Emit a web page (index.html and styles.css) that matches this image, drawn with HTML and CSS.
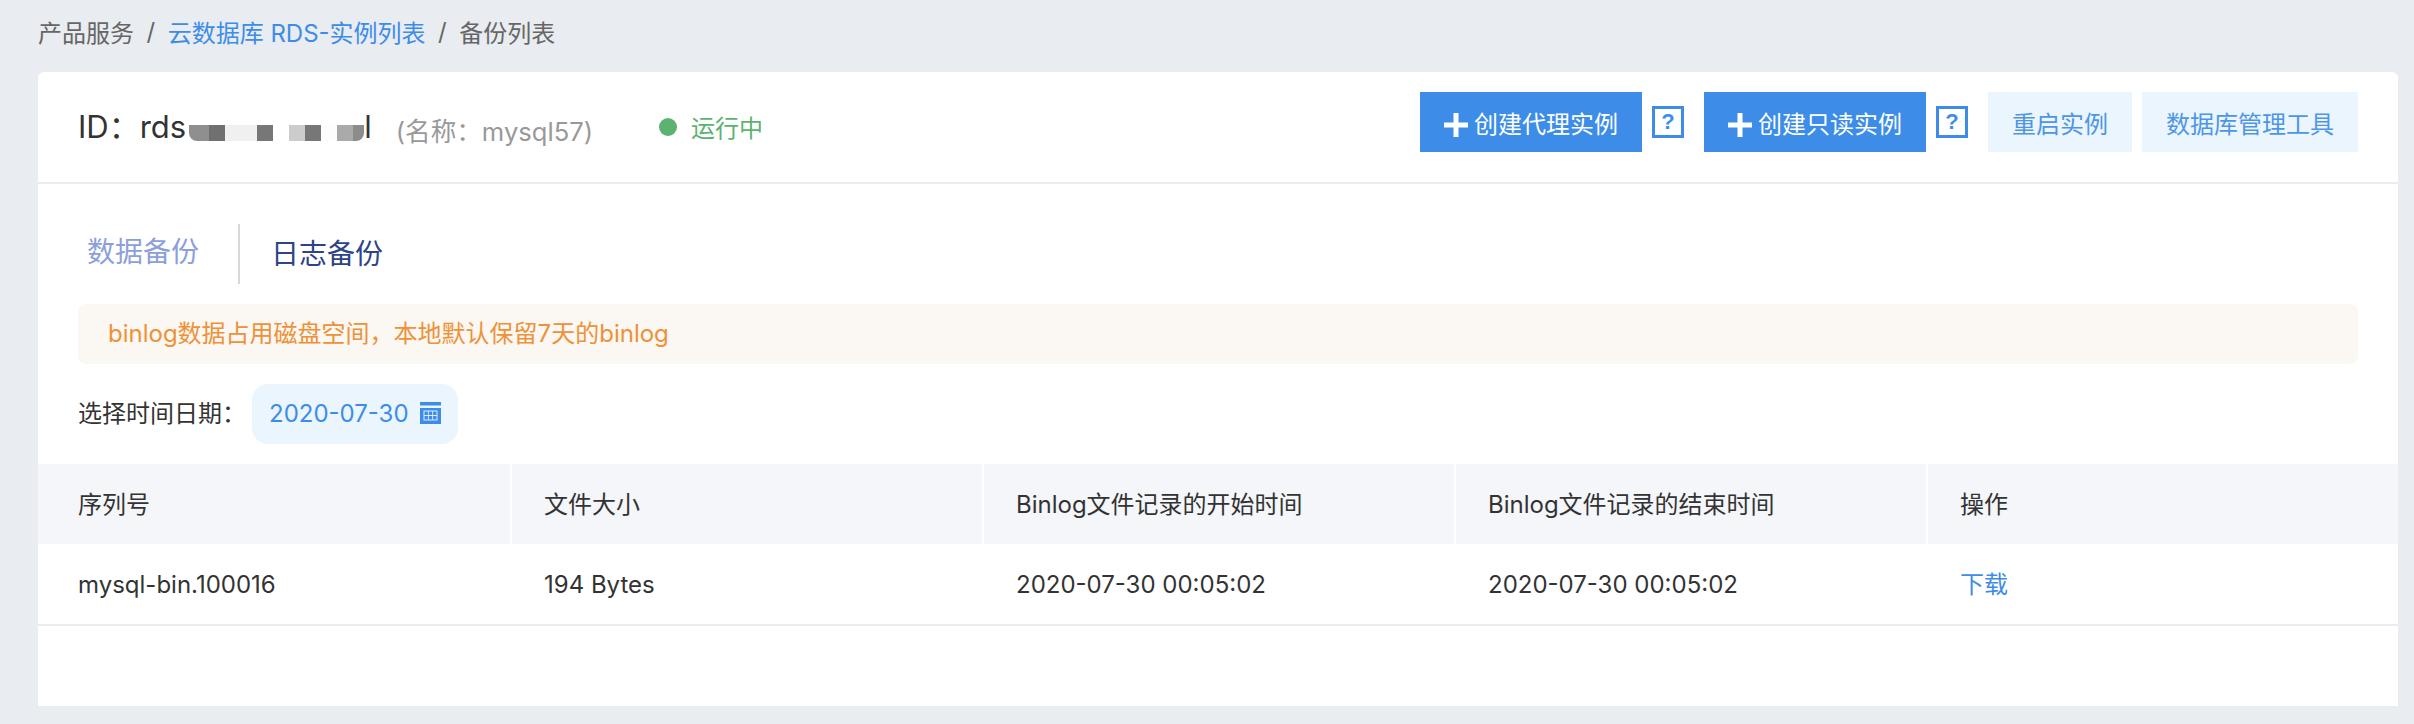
FILE: index.html
```html
<!DOCTYPE html>
<html lang="zh-CN">
<head>
    <meta charset="UTF-8">
    <title>备份列表</title>
    <link rel="stylesheet" href="styles.css">
</head>
<body>

    <!-- Breadcrumb -->
    <div class="crumbs">
        <span>产品服务</span>
        <span class="crumb-sep">/</span>
        <a href="#" class="crumb-link">云数据库 RDS-实例列表</a>
        <span class="crumb-sep">/</span>
        <span>备份列表</span>
    </div>

    <div class="card">
        <!-- Instance header -->
        <div class="head">
            <div class="instance-id">ID：rds<span class="mosaic"></span>l</div>
            <div class="instance-name">(名称：mysql57)</div>
            <div class="status"><i class="status-dot"></i>运行中</div>
            <div class="actions">
                <a href="#" class="btn btn-primary">
                    <svg class="plus" viewBox="0 0 24 24"><path d="M9.5 0h5v9.5H24v5h-9.5V24h-5v-9.5H0v-5h9.5z"/></svg>
                    创建代理实例
                </a>
                <a href="#" class="help">?</a>
                <a href="#" class="btn btn-primary">
                    <svg class="plus" viewBox="0 0 24 24"><path d="M9.5 0h5v9.5H24v5h-9.5V24h-5v-9.5H0v-5h9.5z"/></svg>
                    创建只读实例
                </a>
                <a href="#" class="help">?</a>
                <a href="#" class="btn btn-light btn-restart">重启实例</a>
                <a href="#" class="btn btn-light">数据库管理工具</a>
            </div>
        </div>

        <!-- Tabs -->
        <div class="tabs">
            <a href="#" class="tab tab-data">数据备份</a>
            <a href="#" class="tab tab-log">日志备份</a>
        </div>

        <div class="alert">binlog数据占用磁盘空间，本地默认保留7天的binlog</div>

        <!-- Date filter -->
        <div class="filter">
            <span class="filter-label">选择时间日期：</span>
            <div class="date-pill">
                2020-07-30
                <svg class="calendar" viewBox="0 0 21 22">
                    <path fill="#3d8de8" d="M0 0h21v3.5H0zM0 6h21v16H0z"/>
                    <path fill="#dcebfc" d="M3.5 8.5h14v10h-14z"/>
                    <path fill="#3d8de8" d="M4.5 9.5h3.4v3.5H4.5zM8.8 9.5h3.4v3.5H8.8zM13.1 9.5h3.4v3.5h-3.4zM4.5 14h3.4v3.5H4.5zM8.8 14h3.4v3.5H8.8zM13.1 14h3.4v3.5h-3.4z"/>
                </svg>
            </div>
        </div>

        <!-- Binlog table -->
        <div class="table">
            <div class="row row-head">
                <div class="cell">序列号</div>
                <div class="cell">文件大小</div>
                <div class="cell">Binlog文件记录的开始时间</div>
                <div class="cell">Binlog文件记录的结束时间</div>
                <div class="cell">操作</div>
            </div>
            <div class="row row-body">
                <div class="cell">mysql-bin.100016</div>
                <div class="cell">194 Bytes</div>
                <div class="cell">2020-07-30 00:05:02</div>
                <div class="cell">2020-07-30 00:05:02</div>
                <div class="cell"><a href="#" class="download">下载</a></div>
            </div>
        </div>
    </div>

</body>
</html>
```

FILE: styles.css
```css
body {
    background-color: #e9ecf0;
    color: #333333;
    font-family: 'Inter', 'Noto Sans CJK SC', sans-serif;
    font-size: 24px;
    margin: 0;
    padding: 0 16px 18px 38px;
}

a {
    text-decoration: none;
}

.crumbs {
    height: 72px;
    padding-bottom: 10px;
    box-sizing: border-box;
    display: flex;
    align-items: center;
    color: #666666;
}

.crumb-sep {
    margin: 0 12.5px;
}

.crumb-link {
    color: #3d8de8;
}

.card {
    background-color: #ffffff;
    border-radius: 6px 6px 0 0;
    height: 634px;
}

.head {
    height: 112px;
    box-sizing: border-box;
    padding: 0 40px;
    display: flex;
    align-items: center;
    border-bottom: 2px solid #ebecf0;
}

.instance-id {
    font-size: 31px;
    color: #333333;
    margin-bottom: 6px;
}

.mosaic {
    display: inline-block;
    width: 175px;
    height: 16px;
    margin-left: 3px;
    border-radius: 0 0 8px 8px;
    vertical-align: -3px;
    background: linear-gradient(to right,
        #8f8f8f 0 20px, #707070 20px 36px, #f0f0f0 36px 68px, #777777 68px 84px,
        #ffffff 84px 100px, #cccccc 100px 116px, #777777 116px 132px, #fdfdfd 132px 148px,
        #aaaaaa 148px 164px, #8c8c8c 164px 175px);
}

.instance-name {
    color: #999999;
    font-size: 25.6px;
    margin-left: 24px;
    padding-top: 4px;
}

.status {
    display: flex;
    align-items: center;
    color: #5cb270;
    margin-left: 66px;
    margin-bottom: 2px;
}

.status-dot {
    width: 18px;
    height: 18px;
    border-radius: 50%;
    background-color: #5cb270;
    margin: 2px 14px 0 0;
}

.actions {
    margin-left: auto;
    margin-bottom: 10px;
    display: flex;
    align-items: center;
}

.btn {
    height: 60px;
    display: flex;
    align-items: center;
    justify-content: center;
}

.btn-primary {
    width: 222px;
    background-color: #3d8de8;
    color: #ffffff;
}

.btn-light {
    width: 216px;
    background-color: #eaf5fe;
    color: #4f95e6;
    margin-left: 10px;
}

.btn-restart {
    width: 144px;
    margin-left: 20px;
}

.plus {
    width: 24px;
    height: 24px;
    fill: #ffffff;
    margin: 6px 6px 0 0;
}

.help {
    width: 32px;
    height: 32px;
    box-sizing: border-box;
    border: 3px solid #3d8de8;
    margin: 0 20px 0 10px;
    color: #3d8de8;
    font-family: 'Liberation Sans', sans-serif;
    font-size: 22px;
    font-weight: bold;
    display: flex;
    align-items: center;
    justify-content: center;
}

.help:nth-child(4) {
    margin-right: 0;
}

.tabs {
    height: 60px;
    margin-top: 40px;
    display: flex;
    align-items: center;
    font-size: 28px;
}

.tab-data {
    color: #8c9fdc;
    margin-left: 49px;
    padding-right: 39px;
    height: 60px;
    line-height: 56px;
    border-right: 2px solid #d8d8d8;
}

.tab-log {
    color: #2d4486;
    padding-left: 31px;
    padding-bottom: 4px;
}

.alert {
    height: 60px;
    box-sizing: border-box;
    margin: 20px 40px 0;
    padding: 0 0 5px 30px;
    display: flex;
    align-items: center;
    background-color: #fbf7f2;
    border-radius: 8px;
    color: #ee9138;
}

.filter {
    margin: 20px 40px 0;
    display: flex;
    align-items: center;
}

.filter-label {
    width: 174px;
    color: #333333;
    padding-bottom: 5px;
}

.date-pill {
    width: 206px;
    height: 60px;
    box-sizing: border-box;
    padding: 0 0 2px 17px;
    display: flex;
    align-items: center;
    gap: 11px;
    background-color: #eaf5fe;
    border-radius: 16px;
    color: #3d8de8;
}

.calendar {
    width: 21px;
    height: 22px;
}

.table {
    margin-top: 20px;
}

.row {
    display: grid;
    grid-template-columns: 474px repeat(3, 472px) 470px;
    height: 80px;
}

.row-head {
    background-color: #f5f6fa;
}

.row-head .cell {
    border-right: 2px solid #ffffff;
    padding-bottom: 3px;
    box-sizing: border-box;
}

.row-head .cell:last-child {
    border-right: 0;
}

.row-body {
    height: 82px;
    border-bottom: 2px solid #ebecf0;
    box-sizing: border-box;
}

.cell {
    display: flex;
    align-items: center;
    padding-left: 32px;
    color: #333333;
}

.cell:first-child {
    padding-left: 40px;
}

.download {
    color: #3d8de8;
    padding-bottom: 4px;
}
```
